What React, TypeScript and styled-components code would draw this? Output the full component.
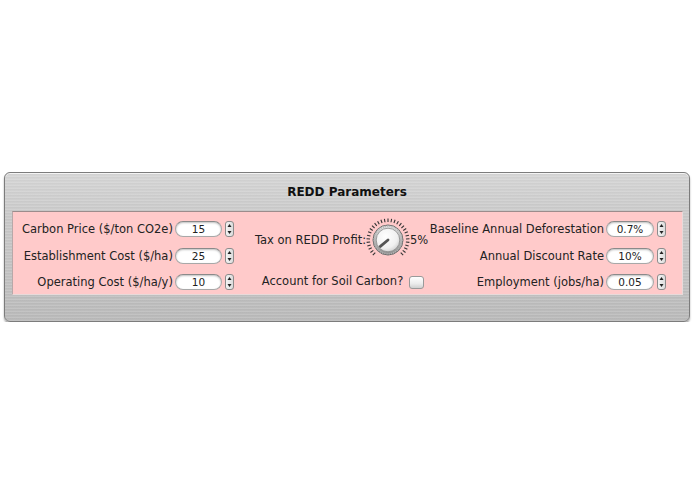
import React from 'react'
import styled, { createGlobalStyle } from 'styled-components'

const GlobalStyle = createGlobalStyle`
    html, body {
        margin: 0;
        padding: 0;
        background: #ffffff;
    }
    body {
        font-family: "DejaVu Sans", Verdana, sans-serif;
        color: #222;
    }
`

const Page = styled.div`
    padding: 172px 0 0 4px;
    width: 686px;
`

const Panel = styled.div`
    box-sizing: border-box;
    width: 686px;
    height: 150px;
    border: 1px solid #7c7c7c;
    border-radius: 6px;
    background:
        repeating-linear-gradient(180deg, rgba(255,255,255,0.12) 0 1px, rgba(0,0,0,0.02) 1px 2px, rgba(255,255,255,0) 2px 3px),
        linear-gradient(180deg, #d6d6d6 0%, #c9c9c9 30%, #c2c2c2 70%, #bababa 100%);
    box-shadow: 0 2px 2px rgba(0,0,0,0.35), inset 0 1px 0 rgba(255,255,255,0.7);
    display: flex;
    flex-direction: column;
`

const Title = styled.div`
    height: 37px;
    display: flex;
    align-items: center;
    justify-content: center;
    font-weight: bold;
    font-size: 12px;
    color: #111;
    padding-bottom: 1px;
`

const Body = styled.div`
    box-sizing: border-box;
    margin: 0 6px 0 7px;
    height: 84px;
    background: #ffcaca;
    border-top: 1px solid #9c8c8c;
    border-left: 1px solid #b8a8a8;
    border-right: 1px solid #e8dada;
    border-bottom: 1px solid #e8dada;
    display: flex;
    padding: 8px 16px 0 9px;
`

const Column = styled.div`
    display: flex;
    flex-direction: column;
    align-items: flex-end;
    gap: 8.5px;
`

const Middle = styled.div`
    display: flex;
    flex-direction: column;
    align-items: flex-end;
    margin-left: 21px;
    margin-top: -3px;
    gap: 9px;
`

const Right = styled(Column)`
    margin-left: auto;
`

const Row = styled.div`
    height: 18px;
    display: flex;
    align-items: center;
    font-size: 11.5px;
    white-space: nowrap;
`

const KnobRow = styled.div`
    height: 46px;
    display: flex;
    align-items: center;
    font-size: 11.5px;
    white-space: nowrap;
`

const Label = styled.span`
    margin-right: 2px;
`

const Field = styled.div<{ $w?: number }>`
    box-sizing: border-box;
    width: ${p => p.$w || 47}px;
    height: 16px;
    border-radius: 8px;
    background: #fff;
    border: 1px solid #a8a8a8;
    border-top-color: #8a8a8a;
    box-shadow: inset 0 1px 2px rgba(0,0,0,0.25);
    display: flex;
    align-items: center;
    justify-content: center;
    font-size: 10.5px;
    color: #222;
`

const Spin = styled.div`
    width: 9px;
    height: 16px;
    margin-left: 3px;
    box-sizing: border-box;
    border: 1px solid #8c8c8c;
    border-radius: 3px;
    background: linear-gradient(90deg, #f4f4f4, #dcdcdc);
    display: flex;
    align-items: center;
    justify-content: center;
`

const Pct = styled.span`
    margin-left: 0;
`

const Check = styled.div`
    box-sizing: border-box;
    width: 15px;
    height: 13px;
    margin: 3px 4px 0 6px;
    border: 1px solid #9a9a9a;
    border-radius: 3px;
    background: linear-gradient(180deg, #ffffff 0%, #ececec 60%, #d0d0d0 100%);
`

const Spinner = () => (
    <Spin>
        <svg width="5" height="12" viewBox="0 0 5 12">
            <path d="M2.5 1 L4.5 4 L0.5 4 Z" fill="#222" />
            <path d="M0.5 8 L4.5 8 L2.5 11 Z" fill="#222" />
        </svg>
    </Spin>
)

const Knob = () => {
    const ticks = []
    const n = 28
    const c = 22
    for (let i = 0; i <= n; i++) {
        const a = (135 + (270 * i) / n) * Math.PI / 180
        const r1 = 18
        const r2 = 21.5
        ticks.push(
            <line key={i}
                x1={c + r1 * Math.cos(a)} y1={c + r1 * Math.sin(a)}
                x2={c + r2 * Math.cos(a)} y2={c + r2 * Math.sin(a)}
                stroke="#333" strokeWidth="1.1" />
        )
    }
    const pa = 140 * Math.PI / 180
    return (
        <svg width="44" height="44" viewBox="0 0 44 44">
            <defs>
                <radialGradient id="face" cx="40%" cy="35%" r="70%">
                    <stop offset="0%" stopColor="#ffffff" />
                    <stop offset="70%" stopColor="#f0f0f0" />
                    <stop offset="100%" stopColor="#cfcfcf" />
                </radialGradient>
                <linearGradient id="ring" x1="0" y1="0" x2="0" y2="1">
                    <stop offset="0%" stopColor="#e2e2e2" />
                    <stop offset="100%" stopColor="#8e8e8e" />
                </linearGradient>
            </defs>
            {ticks}
            <circle cx={c} cy={c} r="15" fill="url(#ring)" stroke="#6a6a6a" strokeWidth="1" />
            <circle cx={c} cy={c} r="13.8" fill="none" stroke="#b4b4b4" strokeWidth="1.6" strokeDasharray="1 1.2" />
            <circle cx={c} cy={c} r="11.8" fill="url(#face)" stroke="#8a8a8a" strokeWidth="0.8" />
            <line x1={c} y1={c} x2={c + 10 * Math.cos(pa)} y2={c + 10 * Math.sin(pa)}
                stroke="#555" strokeWidth="2.8" strokeLinecap="round" />
        </svg>
    )
}

const left = [
    { label: 'Carbon Price ($/ton CO2e)', value: '15' },
    { label: 'Establishment Cost ($/ha)', value: '25' },
    { label: 'Operating Cost ($/ha/y)', value: '10' },
]

const right = [
    { label: 'Baseline Annual Deforestation', value: '0.7%' },
    { label: 'Annual Discount Rate', value: '10%' },
    { label: 'Employment (jobs/ha)', value: '0.05' },
]

const App = () => (
    <Page>
        <GlobalStyle />
        <Panel>
            <Title>REDD Parameters</Title>
            <Body>
                <Column>
                    {left.map(r => (
                        <Row key={r.label}>
                            <Label>{r.label}</Label>
                            <Field>{r.value}</Field>
                            <Spinner />
                        </Row>
                    ))}
                </Column>
                <Middle>
                    <KnobRow>
                        <span>Tax on REDD Profit:</span>
                        <Knob />
                        <Pct>5%</Pct>
                    </KnobRow>
                    <Row>
                        <span>Account for Soil Carbon?</span>
                        <Check />
                    </Row>
                </Middle>
                <Right>
                    {right.map(r => (
                        <Row key={r.label}>
                            <Label>{r.label}</Label>
                            <Field $w={48}>{r.value}</Field>
                            <Spinner />
                        </Row>
                    ))}
                </Right>
            </Body>
        </Panel>
    </Page>
)

export default App
